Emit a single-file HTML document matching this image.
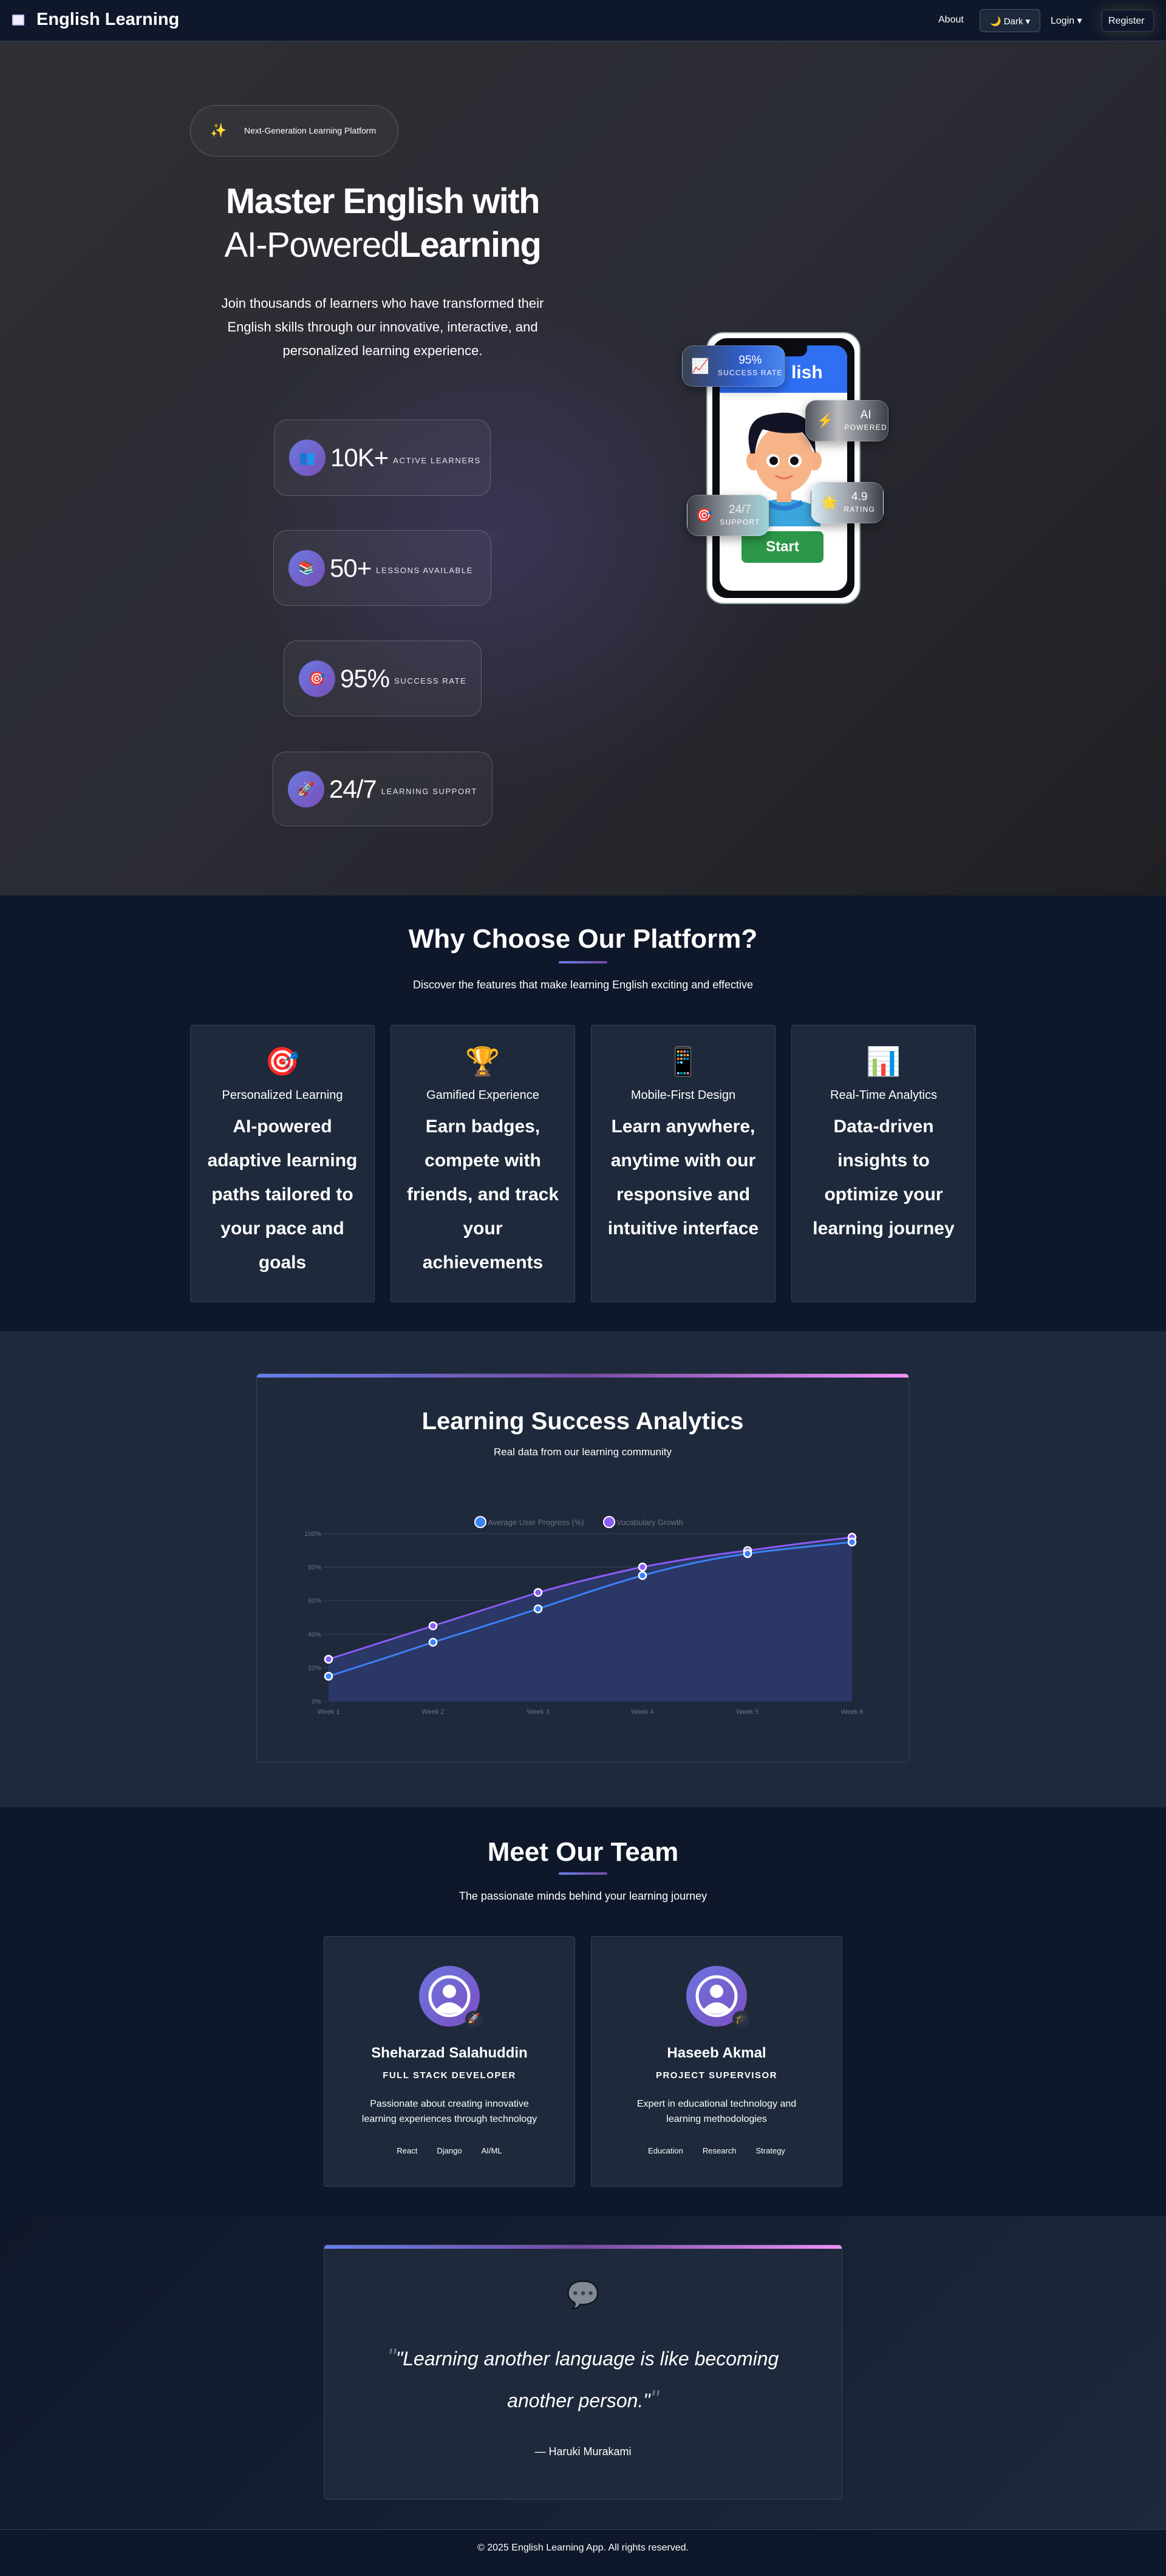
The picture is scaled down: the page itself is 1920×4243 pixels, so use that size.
<!DOCTYPE html>
<html><head><meta charset="utf-8">
<style>
*{margin:0;padding:0;box-sizing:border-box}
body{width:1920px;height:4243px;background:#0f172a;font-family:"Liberation Sans",sans-serif;color:#fff;position:relative;overflow:hidden}
.abs{position:absolute}
.c{text-align:center}
nav{position:absolute;left:0;top:0;width:1920px;height:68px;background:#0f172a;border-bottom:1px solid #334155}
.hero{position:absolute;left:0;top:68px;width:1920px;height:1407px;background:radial-gradient(ellipse 650px 600px at 820px 820px,rgba(90,70,150,.35),rgba(0,0,0,0) 70%),linear-gradient(135deg,#2e3035 0%,#2a2b33 50%,#1f2024 100%)}
.stat{position:absolute;border:1px solid rgba(255,255,255,.2);border-radius:22px;background:rgba(255,255,255,.04);display:flex;align-items:center;padding-left:24px;white-space:nowrap}
.stat .ic{width:60px;height:60px;border-radius:50%;background:linear-gradient(135deg,#6a7ae0,#7a4fb8);display:flex;align-items:center;justify-content:center;font-size:22px;margin-right:8px;flex:none}
.stat .n{font-size:42px;font-weight:400;letter-spacing:-1px}
.stat .l{font-size:13px;letter-spacing:1.6px;margin-left:8px;color:#e6e6ee;margin-top:8px}
.fb{position:absolute;border-radius:18px;border:1px solid rgba(255,255,255,.25);display:flex;align-items:center;box-shadow:0 6px 16px rgba(0,0,0,.35)}
.fb .t{text-align:center;line-height:1.1}
.fb .t b{font-weight:400;font-size:19px;display:block}
.fb .t span{font-size:12px;letter-spacing:1.2px}
.feat{position:absolute;top:1688px;width:304px;height:457px;background:#1e293b;border:1px solid #334155;border-radius:4px;text-align:center}
.feat .i{font-size:46px;margin-top:32px;height:60px}
.feat h4{font-size:20px;font-weight:400;margin-top:12px}
.feat p{font-size:30px;line-height:56px;font-weight:600;margin-top:12px;padding:0 20px}
.team{position:absolute;top:3189px;width:414px;height:413px;background:#1e293b;border:1px solid #334155;border-radius:4px;text-align:center}
.av{width:100px;height:100px;border-radius:50%;background:linear-gradient(135deg,#6b76e0,#7c4fc0);margin:48px auto 0;position:relative}
.team h3{font-size:24px;font-weight:600;margin-top:30px}
.team .r{font-size:15px;letter-spacing:1.5px;margin-top:14px;font-weight:600}
.team .d{font-size:16px;line-height:25px;margin-top:26px;padding:0 50px}
.team .tg{font-size:13px;margin-top:32px;word-spacing:0}
.team .tg span{margin:0 16px}
</style></head><body>
<nav>
 <div class="abs" style="left:20px;top:24px;width:20px;height:18px;background:#eef;border-radius:2px;border:2px solid #c9c2ff"></div>
 <div class="abs" style="left:60px;top:16px;font-size:29px;font-weight:600">English Learning</div>
 <div class="abs" style="left:1545px;top:24px;font-size:16px">About</div>
 <div class="abs" style="left:1613px;top:15px;width:100px;height:38px;border:1px solid #475569;border-radius:6px;background:#1e293b;font-size:15px;padding:10px 0 0 16px">🌙 Dark ▾</div>
 <div class="abs" style="left:1730px;top:24px;font-size:16px">Login ▾</div>
 <div class="abs" style="left:1814px;top:16px;width:86px;height:36px;border:1px solid #334155;border-radius:6px;background:#0f172a;font-size:16px;padding:9px 0 0 10px;box-shadow:0 0 24px rgba(180,160,60,.25)">Register</div>
</nav>
<div class="hero"></div>
<div class="abs" style="left:313px;top:173px;width:343px;height:85px;border:1px solid rgba(255,255,255,.2);border-radius:43px;background:rgba(255,255,255,.03)">
 <span class="abs" style="left:32px;top:28px;font-size:22px">✨</span>
 <span class="abs" style="left:88px;top:33px;font-size:14px">Next-Generation Learning Platform</span>
</div>
<div class="abs c" style="left:300px;top:296px;width:660px;font-size:58px;line-height:72px;letter-spacing:-1.5px"><b>Master English with</b><br><span style="font-weight:500">AI-Powered</span><b>Learning</b></div>
<div class="abs c" style="left:340px;top:480px;width:580px;font-size:22px;line-height:39px">Join thousands of learners who have transformed their English skills through our innovative, interactive, and personalized learning experience.</div>
<div class="stat" style="left:451px;top:691px;width:357px;height:126px"><div class="ic">👥</div><span class="n">10K+</span><span class="l">ACTIVE LEARNERS</span></div>
<div class="stat" style="left:450px;top:873px;width:359px;height:125px"><div class="ic">📚</div><span class="n">50+</span><span class="l">LESSONS AVAILABLE</span></div>
<div class="stat" style="left:467px;top:1055px;width:326px;height:125px"><div class="ic">🎯</div><span class="n">95%</span><span class="l">SUCCESS RATE</span></div>
<div class="stat" style="left:449px;top:1238px;width:362px;height:123px"><div class="ic">🚀</div><span class="n">24/7</span><span class="l">LEARNING SUPPORT</span></div>
<!-- phone -->
<div class="abs" style="left:1163px;top:547px;width:254px;height:448px;background:#fff;border-radius:28px;border:2px solid #9aa">
 <div class="abs" style="left:8px;top:8px;width:234px;height:428px;background:#0c0d12;border-radius:24px"></div>
 <div class="abs" style="left:20px;top:20px;width:210px;height:404px;background:#fff;border-radius:20px;overflow:hidden">
  <div style="height:78px;background:#2f6ff2;font-size:30px;font-weight:700;padding:28px 0 0 118px">lish</div>
  <svg class="abs" style="left:26px;top:98px" width="160" height="200" viewBox="0 0 160 200">
   <path d="M20 170 Q80 140 140 170 L140 200 L20 200Z" fill="#3aa6dd"/>
   <path d="M50 160 Q80 180 110 160" stroke="#2a7fd0" stroke-width="8" fill="none"/>
   <rect x="68" y="130" width="24" height="30" fill="#f5b183"/>
   <ellipse cx="30" cy="92" rx="12" ry="16" fill="#f5b183"/><ellipse cx="130" cy="92" rx="12" ry="16" fill="#f5b183"/>
   <ellipse cx="80" cy="90" rx="48" ry="55" fill="#f7b488"/>
   <path d="M25 80 Q10 20 60 15 Q110 5 130 40 L132 80 Q120 55 110 45 Q80 50 45 40 Q35 55 32 80Z" fill="#121426"/>
   <circle cx="62" cy="92" r="11" fill="#fff"/><circle cx="98" cy="92" r="11" fill="#fff"/>
   <circle cx="63" cy="92" r="7" fill="#111"/><circle cx="97" cy="92" r="7" fill="#111"/>
   <path d="M66 116 Q80 126 94 116" stroke="#f07050" stroke-width="3" fill="none"/>
  </svg>
  <div class="abs" style="left:36px;top:306px;width:135px;height:52px;background:#2c9748;border-radius:8px;font-size:24px;font-weight:700;text-align:center;line-height:52px">Start</div>
 </div>
 <div class="abs" style="left:92px;top:20px;width:72px;height:18px;background:#0c0d12;border-radius:0 0 12px 12px"></div>
</div>
<div class="fb" style="left:1123px;top:569px;width:170px;height:68px;background:linear-gradient(90deg,#3b4150 0%,#2f5fd0 60%,#4c88f0 100%)"><span style="font-size:24px;margin:0 14px 0 14px">📈</span><div class="t"><b>95%</b><span>SUCCESS RATE</span></div></div>
<div class="fb" style="left:1326px;top:659px;width:137px;height:68px;background:linear-gradient(90deg,#50535c,#b8bac0 40%,#3d4048)"><span style="font-size:22px;margin:0 18px 0 18px">⚡</span><div class="t"><b>AI</b><span>POWERED</span></div></div>
<div class="fb" style="left:1335px;top:794px;width:120px;height:68px;background:linear-gradient(90deg,#d8ecf4,#a0a4ac 50%,#3a3d45)"><span style="font-size:22px;margin:0 10px 0 16px">🌟</span><div class="t"><b>4.9</b><span>RATING</span></div></div>
<div class="fb" style="left:1131px;top:815px;width:136px;height:68px;background:linear-gradient(90deg,#3a3d45,#9aa0a8 55%,#9ed4d8)"><span style="font-size:22px;margin:0 12px 0 14px">🎯</span><div class="t"><b style="color:#e8eef0">24/7</b><span>SUPPORT</span></div></div>

<!-- features -->
<div class="abs c" style="left:0;top:1522px;width:1920px;font-size:44px;font-weight:600">Why Choose Our Platform?</div>
<div class="abs" style="left:920px;top:1583px;width:80px;height:4px;border-radius:2px;background:linear-gradient(90deg,#667eea,#764ba2)"></div>
<div class="abs c" style="left:0;top:1612px;width:1920px;font-size:18px">Discover the features that make learning English exciting and effective</div>
<div class="feat" style="left:313px"><div class="i">🎯</div><h4>Personalized Learning</h4><p>AI-powered adaptive learning paths tailored to your pace and goals</p></div>
<div class="feat" style="left:643px"><div class="i">🏆</div><h4>Gamified Experience</h4><p>Earn badges, compete with friends, and track your achievements</p></div>
<div class="feat" style="left:973px"><div class="i">📱</div><h4>Mobile-First Design</h4><p>Learn anywhere, anytime with our responsive and intuitive interface</p></div>
<div class="feat" style="left:1303px"><div class="i">📊</div><h4>Real-Time Analytics</h4><p>Data-driven insights to optimize your learning journey</p></div>

<!-- analytics -->
<div class="abs" style="left:0;top:2193px;width:1920px;height:784px;background:#1e293b"></div>
<div class="abs" style="left:422px;top:2262px;width:1075px;height:641px;border:1px solid #334155;border-radius:6px;background:#1e293b;overflow:hidden">
 <div style="height:6px;background:linear-gradient(90deg,#667eea,#764ba2 50%,#f093fb)"></div>
 <div class="c" style="font-size:40px;font-weight:600;margin-top:50px">Learning Success Analytics</div>
 <div class="c" style="font-size:17px;margin-top:18px;font-weight:500">Real data from our learning community</div>
 <svg class="abs" style="left:0;top:4px" width="1075" height="637" viewBox="0 0 1075 637" font-family="Liberation Sans, sans-serif">
  <circle cx="368" cy="240" r="9" fill="#3b82f6" stroke="#fff" stroke-width="2"/><text x="380" y="245" font-size="13" fill="#6b7280">Average User Progress (%)</text>
  <circle cx="580" cy="240" r="9" fill="#8b5cf6" stroke="#fff" stroke-width="2"/><text x="592" y="245" font-size="13" fill="#6b7280">Vocabulary Growth</text>
  <g stroke="#3a4558" stroke-width="1">
   <line x1="110" y1="259" x2="980" y2="259"/><line x1="110" y1="314" x2="980" y2="314"/><line x1="110" y1="369" x2="980" y2="369"/><line x1="110" y1="425" x2="980" y2="425"/><line x1="110" y1="480" x2="980" y2="480"/><line x1="110" y1="535" x2="980" y2="535"/>
  </g>
  <g font-size="11" fill="#64748b" text-anchor="end">
   <text x="106" y="263">100%</text><text x="106" y="318">80%</text><text x="106" y="373">60%</text><text x="106" y="429">40%</text><text x="106" y="484">20%</text><text x="106" y="539">0%</text>
  </g>
  <g font-size="11" fill="#64748b" text-anchor="middle">
   <text x="118" y="556">Week 1</text><text x="290" y="556">Week 2</text><text x="463" y="556">Week 3</text><text x="635" y="556">Week 4</text><text x="808" y="556">Week 5</text><text x="980" y="556">Week 6</text>
  </g>
  <path d="M118 466 C175 448 233 429 290 411 C348 393 405 374 463 356 C520 340 578 326 635 314 C693 303 750 294 808 287 C865 279 923 272 980 265 L980 535 L118 535Z" fill="#2b3766"/>
  <path d="M118 466 C175 448 233 429 290 411 C348 393 405 374 463 356 C520 340 578 326 635 314 C693 303 750 294 808 287 C865 279 923 272 980 265" fill="none" stroke="#8b5cf6" stroke-width="3"/>
  <path d="M118 494 C175 476 233 457 290 438 C348 420 405 402 463 383 C520 364 578 344 635 328 C693 312 750 300 808 292 C865 284 923 279 980 273" fill="none" stroke="#3b82f6" stroke-width="3"/>
  <g stroke="#fff" stroke-width="2.5">
   <circle cx="118" cy="466" r="6" fill="#8b5cf6"/><circle cx="290" cy="411" r="6" fill="#8b5cf6"/><circle cx="463" cy="356" r="6" fill="#8b5cf6"/><circle cx="635" cy="314" r="6" fill="#8b5cf6"/><circle cx="808" cy="287" r="6" fill="#8b5cf6"/><circle cx="980" cy="265" r="6" fill="#8b5cf6"/>
   <circle cx="118" cy="494" r="6" fill="#3b82f6"/><circle cx="290" cy="438" r="6" fill="#3b82f6"/><circle cx="463" cy="383" r="6" fill="#3b82f6"/><circle cx="635" cy="328" r="6" fill="#3b82f6"/><circle cx="808" cy="292" r="6" fill="#3b82f6"/><circle cx="980" cy="273" r="6" fill="#3b82f6"/>
  </g>
 </svg>
</div>

<!-- team -->
<div class="abs c" style="left:0;top:3026px;width:1920px;font-size:44px;font-weight:600">Meet Our Team</div>
<div class="abs" style="left:920px;top:3084px;width:80px;height:4px;border-radius:2px;background:linear-gradient(90deg,#667eea,#764ba2)"></div>
<div class="abs c" style="left:0;top:3113px;width:1920px;font-size:18px">The passionate minds behind your learning journey</div>
<div class="team" style="left:533px"><div class="av"><svg width="100" height="100" viewBox="0 0 100 100"><circle cx="50" cy="50" r="32" fill="none" stroke="#fff" stroke-width="5"/><circle cx="50" cy="42" r="11" fill="#fff"/><path d="M28 72 Q50 48 72 72 Q50 86 28 72Z" fill="#fff"/></svg><span class="abs" style="right:-4px;bottom:-2px;width:28px;height:28px;border-radius:50%;background:#2a3142;font-size:16px;line-height:28px">🚀</span></div><h3>Sheharzad Salahuddin</h3><div class="r">FULL STACK DEVELOPER</div><div class="d">Passionate about creating innovative learning experiences through technology</div><div class="tg"><span>React</span><span>Django</span><span>AI/ML</span></div></div>
<div class="team" style="left:973px"><div class="av"><svg width="100" height="100" viewBox="0 0 100 100"><circle cx="50" cy="50" r="32" fill="none" stroke="#fff" stroke-width="5"/><circle cx="50" cy="42" r="11" fill="#fff"/><path d="M28 72 Q50 48 72 72 Q50 86 28 72Z" fill="#fff"/></svg><span class="abs" style="right:-4px;bottom:-2px;width:28px;height:28px;border-radius:50%;background:#2a3142;font-size:16px;line-height:28px">🎓</span></div><h3>Haseeb Akmal</h3><div class="r">PROJECT SUPERVISOR</div><div class="d">Expert in educational technology and learning methodologies</div><div class="tg"><span>Education</span><span>Research</span><span>Strategy</span></div></div>

<!-- quote -->
<div class="abs" style="left:0;top:3650px;width:1920px;height:516px;background:linear-gradient(135deg,#0f172a,#1e293b)"></div>
<div class="abs" style="left:533px;top:3697px;width:854px;height:420px;border:1px solid #334155;border-radius:6px;background:#1e293b;overflow:hidden">
 <div style="height:6px;background:linear-gradient(90deg,#667eea,#764ba2 50%,#f093fb)"></div>
 <div class="c" style="font-size:44px;margin-top:50px;opacity:.45">💬</div>
 <div class="c" style="font-size:32px;font-style:italic;line-height:67px;margin-top:44px;padding:0 90px;font-weight:500"><span style="color:#64748b;font-size:40px">"</span>"Learning another language is like becoming another person."<span style="color:#64748b;font-size:40px">"</span></div>
 <div class="c" style="font-size:18px;margin-top:40px">— Haruki Murakami</div>
</div>
<div class="abs" style="left:0;top:4166px;width:1920px;height:77px;background:#0f172a;border-top:1px solid #334155"></div>
<div class="abs c" style="left:0;top:4188px;width:1920px;font-size:16px">© 2025 English Learning App. All rights reserved.</div>
</body></html>
